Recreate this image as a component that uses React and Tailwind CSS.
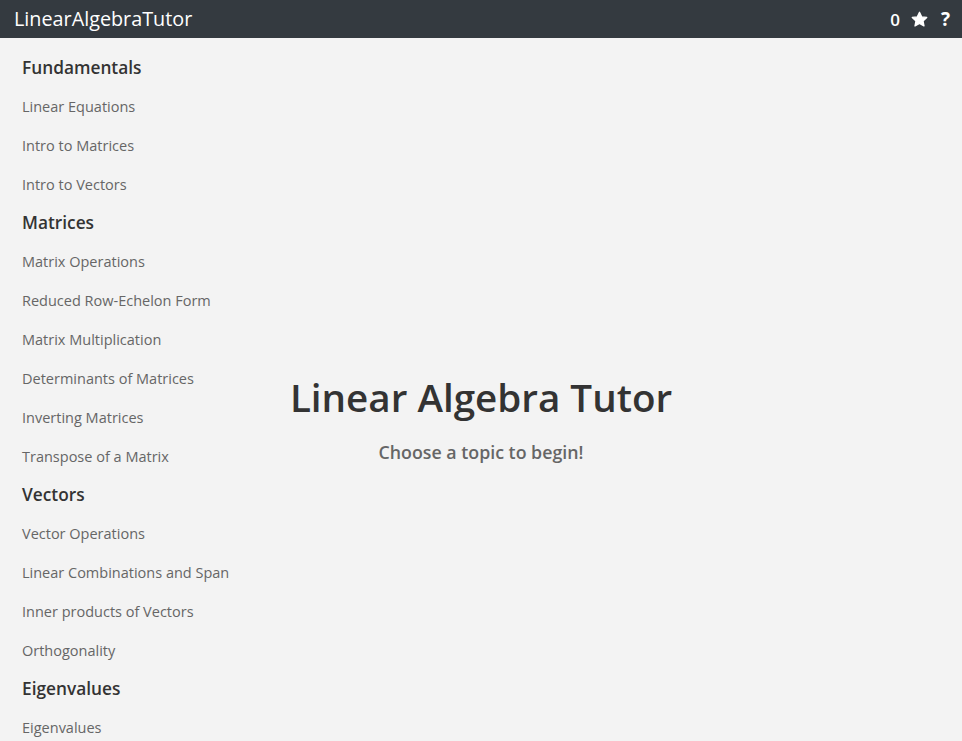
import React from 'react';

const sections = [
  { title: 'Fundamentals', items: ['Linear Equations', 'Intro to Matrices', 'Intro to Vectors'] },
  {
    title: 'Matrices',
    items: [
      'Matrix Operations',
      'Reduced Row-Echelon Form',
      'Matrix Multiplication',
      'Determinants of Matrices',
      'Inverting Matrices',
      'Transpose of a Matrix',
    ],
  },
  {
    title: 'Vectors',
    items: ['Vector Operations', 'Linear Combinations and Span', 'Inner products of Vectors', 'Orthogonality'],
  },
  { title: 'Eigenvalues', items: ['Eigenvalues'] },
];

// rounded five-point star, like the font icon in the bar
const Star = () => (
  <svg viewBox="0 0 24 24" className="w-[19px] h-[19px]">
    <path
      d="M12 2.8l2.75 5.9 6.4.75-4.7 4.4 1.25 6.35L12 17.05 6.3 20.2l1.25-6.35-4.7-4.4 6.4-.75z"
      fill="white"
      stroke="white"
      strokeWidth="1.6"
      strokeLinejoin="round"
    />
  </svg>
);

export default function App() {
  return (
    <div className="min-h-screen bg-[#f3f3f3] font-['Open_Sans',sans-serif]">
      {/* Top bar */}
      <header className="h-[38px] bg-[#343a40] flex items-center justify-between pl-[14px] pr-[12px]">
        <span className="text-white text-[19.8px] leading-none">LinearAlgebraTutor</span>
        <div className="flex items-center gap-[10px] text-white">
          <span className="text-[17px] font-semibold leading-none">0</span>
          <Star />
          <span className="text-[19px] font-bold leading-none ml-[2px]">?</span>
        </div>
      </header>

      <div className="grid">
        {/* Topic list */}
        <nav className="col-start-1 row-start-1 w-[260px] pl-[22px] pt-[11px] z-10">
          {sections.map((s) => (
            <div key={s.title}>
              <h2 className="h-[38px] pb-[1px] flex items-center text-[17.3px] font-semibold text-[#333]">
                {s.title}
              </h2>
              {s.items.map((item) => (
                <a
                  key={item}
                  href="#"
                  className="h-[39px] flex items-center text-[14.5px] text-[#666] hover:text-[#333]"
                >
                  {item}
                </a>
              ))}
            </div>
          ))}
        </nav>

        {/* Welcome */}
        <main className="col-start-1 row-start-1 flex flex-col items-center pt-[340px]">
          <h1 className="text-[38.6px] font-semibold text-[#333] leading-none">Linear Algebra Tutor</h1>
          <p className="mt-[22px] text-[17.8px] font-semibold text-[#666]">Choose a topic to begin!</p>
        </main>
      </div>
    </div>
  );
}
